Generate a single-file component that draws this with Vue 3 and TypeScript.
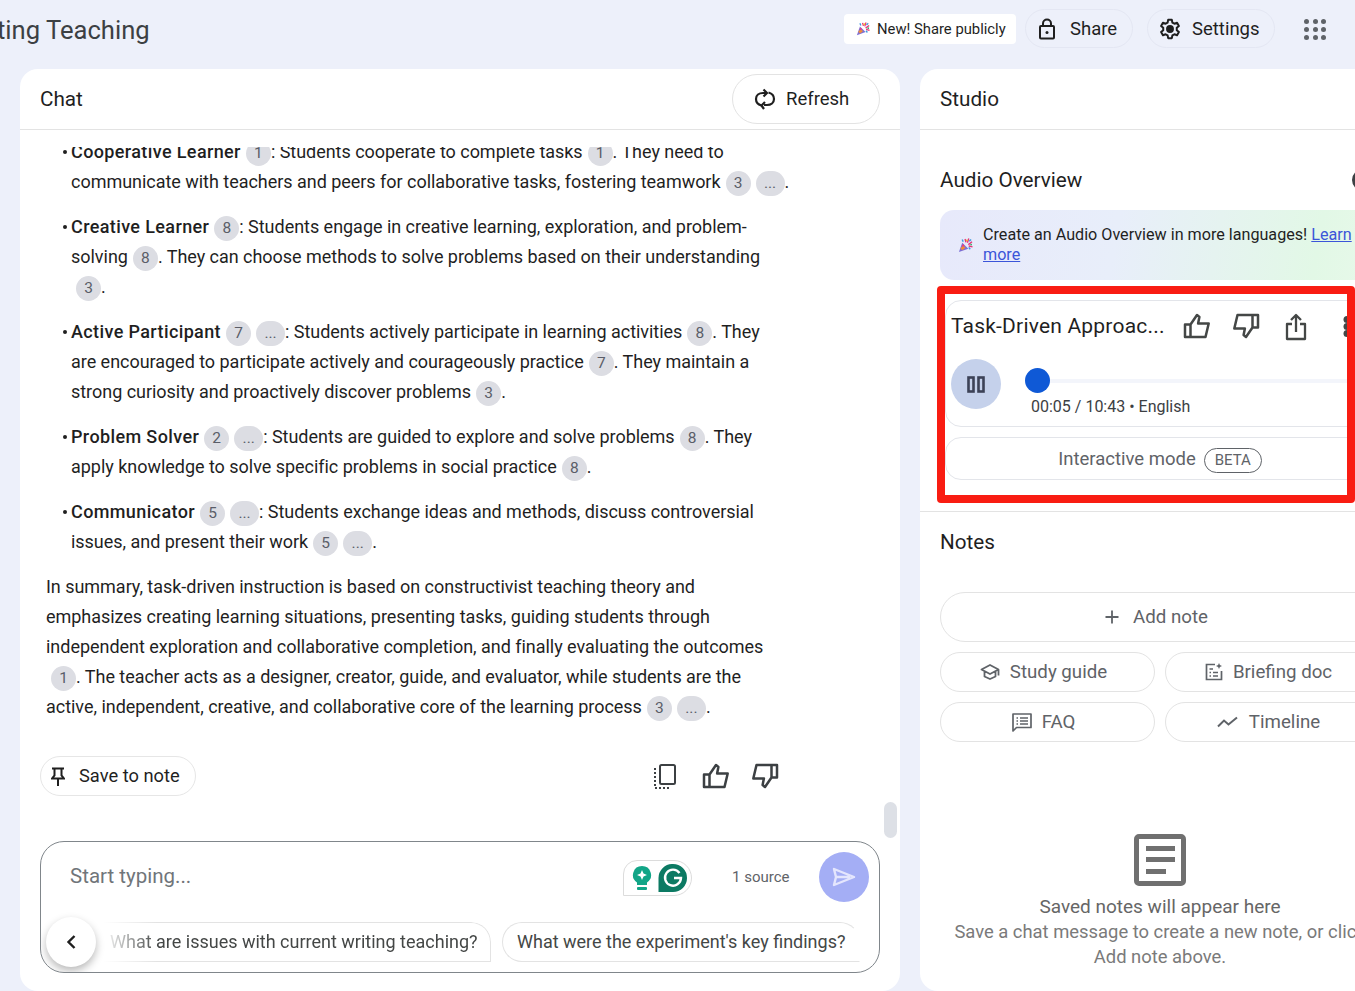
<script setup lang="ts">
type Seg = { t?: string; b?: string; c?: string; br?: boolean }

function parse(src: string): Seg[] {
  // {n} = citation chip, *x* = bold, | = line break
  const out: Seg[] = []
  const re = /\{([^}]+)\}|\*([^*]+)\*|(\|)|([^{*|]+)/g
  let m: RegExpExecArray | null
  while ((m = re.exec(src))) {
    if (m[1]) out.push({ c: m[1] })
    else if (m[2]) out.push({ b: m[2] })
    else if (m[3]) out.push({ br: true })
    else if (m[4]) out.push({ t: m[4] })
  }
  return out
}

const bullets = [
  '*Cooperative Learner*{1}: Students cooperate to complete tasks{1}. They need to|communicate with teachers and peers for collaborative tasks, fostering teamwork{3}{...}.',
  '*Creative Learner*{8}: Students engage in creative learning, exploration, and problem-|solving{8}. They can choose methods to solve problems based on their understanding|{3}.',
  '*Active Participant*{7}{...}: Students actively participate in learning activities{8}. They|are encouraged to participate actively and courageously practice{7}. They maintain a|strong curiosity and proactively discover problems{3}.',
  '*Problem Solver*{2}{...}: Students are guided to explore and solve problems{8}. They|apply knowledge to solve specific problems in social practice{8}.',
  '*Communicator*{5}{...}: Students exchange ideas and methods, discuss controversial|issues, and present their work{5}{...}.',
].map(parse)

const summary = parse(
  'In summary, task-driven instruction is based on constructivist teaching theory and|emphasizes creating learning situations, presenting tasks, guiding students through|independent exploration and collaborative completion, and finally evaluating the outcomes|{1}. The teacher acts as a designer, creator, guide, and evaluator, while students are the|active, independent, creative, and collaborative core of the learning process{3}{...}.',
)
</script>

<template>
  <div class="page">
    <svg class="defs" width="0" height="0" aria-hidden="true">
      <defs>
        <symbol id="thumb" viewBox="0 0 28 26">
          <path d="M2 11.500h5.500V24H2zM7.500 11.500 14 2l2.400 2-1.300 6.500h10.600L22.500 24h-15" fill="none" stroke="currentColor" stroke-width="2.500" stroke-linejoin="round" />
        </symbol>
        <symbol id="party" viewBox="0 0 16 16">
          <path d="M1 15 4.500 5 11 11.500z" fill="#7d6fd6" />
          <path d="M2.500 11 5.500 8l2.500 2.500-3.500 2.500z" fill="#ef8a3c" />
          <path d="M4 8 5.500 6.500 7 8 5 9.500z" fill="#e8417f" />
          <path d="M7.500 1l1 3.500M11.500.5 10 5M15 4l-4 3M15.500 9.500l-4-1" stroke="#e5377c" stroke-width="1.500" />
          <path d="M4.500 1.500l1 2.500M14 1.500l-2 2M13 12l-1.500-2" stroke="#3f9be0" stroke-width="1.500" />
          <circle cx="9.500" cy="2.500" r="1" fill="#f2bd1d" />
          <circle cx="14" cy="7" r="1" fill="#35b36b" />
        </symbol>
      </defs>
    </svg>

    <header class="topbar">
      <h1 class="title">Writing Teaching</h1>
      <div class="top-actions">
        <div class="new-chip">
          <svg class="party" width="14" height="14"><use href="#party" /></svg>
          <span>New! Share publicly</span>
        </div>
        <button class="top-btn share">
          <svg width="18" height="22" viewBox="0 0 18 22" fill="none" stroke="#1f1f1f" stroke-width="2">
            <rect x="2" y="8" width="14" height="12.500" rx="1" />
            <path d="M5 8V5.500a4 4 0 0 1 8 0V8" />
            <circle cx="9" cy="14.500" r="1.500" fill="#1f1f1f" stroke="none" />
          </svg>
          <span>Share</span>
        </button>
        <button class="top-btn settings">
          <svg width="22" height="22" viewBox="0 0 24 24" fill="none" stroke="#1f1f1f" stroke-width="2.200" stroke-linejoin="round">
            <path d="M10 2h4l.6 3 2.200 1.200 2.900-1 2 3.500-2.300 2v2.600l2.300 2-2 3.500-2.900-1L14.600 19 14 22h-4l-.6-3-2.200-1.200-2.900 1-2-3.500 2.300-2v-2.600l-2.300-2 2-3.500 2.900 1L9.400 5z" />
            <circle cx="12" cy="12" r="3.200" fill="#1f1f1f" />
          </svg>
          <span>Settings</span>
        </button>
        <div class="apps">
          <i v-for="n in 9" :key="n"></i>
        </div>
      </div>
    </header>

    <main class="columns">
      <section class="panel chat">
        <div class="panel-head">
          <h2>Chat</h2>
          <button class="refresh">
            <svg width="22" height="24" viewBox="0 0 22 24" fill="none" stroke="#1f1f1f" stroke-width="2.200">
              <path d="M7.500 18.500C4 17.500 2 15 2 12c0-3.500 3-6 7-6h3" />
              <path d="M14.500 5.500c3.500 1 5.500 3.500 5.500 6.500 0 3.500-3 6-7 6h-3" />
              <path d="M9.500 2.500 13 6l-3.500 3.500M11 15l-3.500 3.500L10 22" stroke-linejoin="round" />
            </svg>
            <span>Refresh</span>
          </button>
        </div>

        <div class="messages">
          <div class="thread">
            <ul class="list">
              <li v-for="(segs, i) in bullets" :key="i">
                <i class="dot"></i>
                <div>
                  <template v-for="(s, j) in segs" :key="j">
                    <br v-if="s.br" />
                    <b v-else-if="s.b">{{ s.b }}</b>
                    <span v-else-if="s.c" class="cite" :class="{ wide: s.c === '...' }">{{ s.c }}</span>
                    <template v-else>{{ s.t }}</template>
                  </template>
                </div>
              </li>
            </ul>
            <p class="summary">
              <template v-for="(s, j) in summary" :key="j">
                <br v-if="s.br" />
                <span v-else-if="s.c" class="cite" :class="{ wide: s.c === '...' }">{{ s.c }}</span>
                <template v-else>{{ s.t }}</template>
              </template>
            </p>
            <div class="msg-actions">
              <button class="save">
                <svg width="14" height="19" viewBox="0 0 14 19" fill="none" stroke="#1f1f1f" stroke-width="2">
                  <path d="M1 1.500h12M3.500 1.500v7L1 11.500h12l-2.500-3v-7M7 11.500V19" />
                </svg>
                <span>Save to note</span>
              </button>
              <div class="msg-icons">
                <svg class="copy" width="23" height="27" viewBox="0 0 23 27" fill="none" stroke="#3c4043" stroke-width="2">
                  <rect x="7" y="2" width="15" height="19" rx="1.500" />
                  <path d="M2 5v20h16" stroke-dasharray="2 2" />
                </svg>
                <svg class="thumb-up" width="28" height="26"><use href="#thumb" /></svg>
                <svg class="thumb-down" width="28" height="26"><use href="#thumb" /></svg>
              </div>
            </div>
          </div>
        </div>
        <i class="scroll-thumb"></i>

        <div class="composer">
          <div class="composer-top">
            <span class="placeholder">Start typing...</span>
            <div class="grammarly">
              <svg width="20" height="26" viewBox="0 0 20 26">
                <path d="M10 1a9 9 0 0 0-5 16.500V20h10v-2.500A9 9 0 0 0 10 1z" fill="#12a587" />
                <rect x="5" y="22" width="10" height="3" rx="1" fill="#12a587" />
                <path d="M10 5l1.500 3.500L15 10l-3.500 1.500L10 15l-1.500-3.500L5 10l3.500-1.500z" fill="#fff" />
              </svg>
              <svg width="30" height="28" viewBox="0 0 29 28">
                <path d="M14.500 0a14 14 0 0 1 0 28H0V14A14 14 0 0 1 14.500 0z" fill="#0c7a63" />
                <path d="M21 9a8 8 0 1 0 1.500 5h-7" fill="none" stroke="#fff" stroke-width="2.400" />
              </svg>
            </div>
            <span class="sources">1 source</span>
            <button class="send">
              <svg width="24" height="20" viewBox="0 0 24 20" fill="none" stroke="#e4e6fd" stroke-width="2.400" stroke-linejoin="round">
                <path d="M2 2 22 10 2 18l2-8zM4 10h14" />
              </svg>
            </button>
          </div>
          <div class="composer-bottom">
            <button class="back">
              <svg width="12" height="16" viewBox="0 0 12 16" fill="none" stroke="#1f1f1f" stroke-width="2.400">
                <path d="M9.500 2 3.500 8l6 6" />
              </svg>
            </button>
            <span class="suggest first">What are issues with current writing teaching?</span>
            <span class="suggest second">What were the experiment's key findings?</span>
          </div>
        </div>
      </section>

      <section class="panel studio">
        <div class="panel-head">
          <h2>Studio</h2>
        </div>
        <div class="audio-head">
          <h3>Audio Overview</h3>
          <i class="info"></i>
        </div>
        <div class="banner">
          <svg class="party" width="15" height="15"><use href="#party" /></svg>
          <p>Create an Audio Overview in more languages! <a>Learn<br />more</a></p>
        </div>

        <div class="highlight">
          <div class="player">
            <div class="player-top">
              <span class="track-title">Task-Driven Approac...</span>
              <svg class="p-up" width="28" height="26"><use href="#thumb" /></svg>
              <svg class="p-down" width="28" height="26"><use href="#thumb" /></svg>
              <svg class="p-share" width="22" height="29" viewBox="0 0 22 29" fill="none" stroke="#444746" stroke-width="2.300" stroke-linejoin="round">
                <path d="M7 12H2v15h18V12h-5M11 20V3M6 8l5-5 5 5" />
              </svg>
              <svg class="p-more" width="8" height="21" viewBox="0 0 8 21" fill="#444746">
                <circle cx="4" cy="3.500" r="3.500" /><circle cx="4" cy="10.500" r="3.500" /><circle cx="4" cy="17.500" r="3.500" />
              </svg>
            </div>
            <div class="player-main">
              <button class="pause">
                <svg width="18" height="17" viewBox="0 0 18 17" fill="none" stroke="#3c4257" stroke-width="2.600">
                  <rect x="1.500" y="1.500" width="5" height="14" />
                  <rect x="11.500" y="1.500" width="5" height="14" />
                </svg>
              </button>
              <div class="progress">
                <div class="slider"><i class="knob"></i><i class="rail"></i></div>
                <div class="time">00:05 / 10:43 • English</div>
              </div>
            </div>
          </div>
          <div class="interactive">
            <span>Interactive mode</span>
            <em>BETA</em>
          </div>
        </div>

        <div class="notes-head">
          <h3>Notes</h3>
        </div>
        <div class="note-actions">
          <button class="note-btn add">
            <svg width="16" height="16" viewBox="0 0 16 16" stroke="#5f6368" stroke-width="1.800"><path d="M8 1.500v13M1.500 8h13" /></svg>
            <span>Add note</span>
          </button>
          <button class="note-btn">
            <svg width="20" height="18" viewBox="0 0 20 18" fill="none" stroke="#5f6368" stroke-width="1.800" stroke-linejoin="round">
              <path d="M10 2 1.500 6.500 10 11l8.500-4.500zM4.500 8.500v5L10 16l5.500-2.500v-5M18.500 6.500v6" />
            </svg>
            <span>Study guide</span>
          </button>
          <button class="note-btn">
            <svg width="18" height="18" viewBox="0 0 18 18" fill="none" stroke="#5f6368" stroke-width="1.700">
              <path d="M10 1.500H1.500v15h15V8" />
              <path d="M4.500 6h3.500M4.500 9.500h1.500M8 9.500h5M4.500 13h1.500M8 13h5" />
              <path d="M14 0l.9 2.100L17 3l-2.100.9L14 6l-.9-2.100L11 3l2.100-.9z" fill="#5f6368" stroke="none" />
            </svg>
            <span>Briefing doc</span>
          </button>
          <button class="note-btn">
            <svg width="20" height="19" viewBox="0 0 20 19" fill="none" stroke="#5f6368" stroke-width="1.700" stroke-linejoin="round">
              <path d="M1 1h18v13.500H4.500L1 18zM4.500 5h1.500M8 5h8M4.500 8h1.500M8 8h8M4.500 11h1.500M8 11h8" />
            </svg>
            <span>FAQ</span>
          </button>
          <button class="note-btn">
            <svg width="22" height="12" viewBox="0 0 22 12" fill="none" stroke="#5f6368" stroke-width="2">
              <path d="M1 10.500 7 4.500l4.500 4L20 1.500" />
            </svg>
            <span>Timeline</span>
          </button>
        </div>

        <div class="empty">
          <svg width="52" height="52" viewBox="0 0 52 52">
            <rect x="2.500" y="2.500" width="47" height="47" rx="2.500" fill="none" stroke="#707070" stroke-width="5" />
            <path d="M12 12h29v5H12zM12 23h29v5H12zM12 35h20v5H12z" fill="#707070" />
          </svg>
          <strong>Saved notes will appear here</strong>
          <p>Save a chat message to create a new note, or click<br />Add note above.</p>
        </div>
      </section>
    </main>
  </div>
</template>

<style>
html, body { margin: 0; background: #edf0fa; overflow: hidden; }
</style>

<style scoped>
* { box-sizing: border-box; }
.page {
  width: 1355px;
  height: 991px;
  overflow: hidden;
  background: #edf0fa;
  color: #1f1f1f;
  font-family: Roboto, "Liberation Sans", sans-serif;
  position: relative;
}
.defs { display: block; height: 0; }
button { font: inherit; color: inherit; background: none; padding: 0; }
h1, h2, h3, p, ul { margin: 0; padding: 0; font-weight: 400; }
i { display: block; font-style: normal; }

.topbar { height: 69px; display: flex; align-items: flex-start; }
.title {
  font-size: 25.600px;
  line-height: 30px;
  margin: 15px 0 0 -40.400px;
  white-space: nowrap;
  color: #3c4043;
  width: 884.400px;
  flex: none;
}
.top-actions { display: flex; align-items: flex-start; flex: none; }
.new-chip {
  margin-top: 14px;
  height: 30px;
  width: 172px;
  background: #fff;
  border-radius: 4px;
  display: flex;
  align-items: center;
  padding-left: 12px;
  gap: 7px;
  font-size: 14.800px;
}
.party { flex: none; }
.top-btn {
  margin-top: 9px;
  height: 39px;
  border: 1px solid #e4e7f3;
  border-radius: 20px;
  display: flex;
  align-items: center;
  font-size: 18.500px;
}
.share { margin-left: 9px; width: 108px; padding-left: 12px; gap: 14px; }
.settings { margin-left: 14px; width: 128px; padding-left: 11px; gap: 11px; }
.apps {
  margin: 19px 0 0 29px;
  width: 22px;
  display: grid;
  grid-template-columns: repeat(3, 5px);
  gap: 3px 3.500px;
}
.apps i { width: 5px; height: 5px; border-radius: 50%; background: #5f6368; }

.columns { display: flex; gap: 20px; padding-left: 20px; width: 1420px; }
.panel {
  flex: none;
  height: 922px;
  background: #fff;
  border-radius: 18px;
  position: relative;
  display: flex;
  flex-direction: column;
}
.chat { width: 880px; }
.studio { width: 480px; }
.panel-head {
  flex: none;
  height: 61px;
  border-bottom: 1px solid #e3e3e3;
  padding: 0 20px;
  display: flex;
  align-items: center;
  justify-content: space-between;
}
.panel-head h2 { font-size: 20.700px; }
.refresh {
  width: 148px;
  height: 50px;
  border: 1px solid #e3e3e3;
  border-radius: 25px;
  display: flex;
  align-items: center;
  padding-left: 21px;
  gap: 10px;
  font-size: 18.500px;
}

.messages { flex: 1; min-height: 0; margin-top: 17px; overflow: hidden; }
.thread { margin-top: -10px; font-size: 18px; letter-spacing: -.03px; line-height: 30px; white-space: nowrap; color: #1f1f1f; }
.list { list-style: none; padding-left: 43px; }
.list li { display: flex; margin-bottom: 15px; }
.dot { flex: none; width: 4px; height: 4px; margin: 13px 4px 0 0; border-radius: 50%; background: #1f1f1f; }
.list b { font-weight: 500; letter-spacing: .38px; }
.summary { padding-left: 26px; }
.cite {
  display: inline-block;
  width: 25px;
  height: 25px;
  margin-left: 5px;
  border-radius: 13px;
  background: #dcdde3;
  color: #5a5d68;
  font-size: 15.500px;
  line-height: 25px;
  text-align: center;
  vertical-align: middle;
}
.cite.wide { width: 29px; }

.msg-actions { display: flex; align-items: center; height: 40px; margin: 34px 0 0 20px; }
.save {
  width: 156px;
  height: 40px;
  border: 1px solid #e6e6e6;
  border-radius: 20px;
  display: flex;
  align-items: center;
  padding-left: 10px;
  gap: 14px;
  font-size: 18.300px;
}
.msg-icons { display: flex; align-items: center; margin-left: 457px; color: #3c4043; }
.thumb-up { margin-left: 26px; }
.thumb-down { margin-left: 21px; transform: rotate(180deg); }

.scroll-thumb {
  position: absolute;
  left: 864px;
  top: 733px;
  width: 13px;
  height: 36px;
  border-radius: 7px;
  background: #dde0e6;
}

.composer {
  flex: none;
  margin: 45px 20px 18px;
  height: 132px;
  border: 1px solid #80868b;
  border-radius: 24px;
  overflow: hidden;
}
.composer-top { height: 50px; margin-top: 10px; display: flex; align-items: center; padding-left: 29px; }
.placeholder { font-size: 20.500px; color: #70757a; width: 553px; margin-top: -2px; }
.grammarly {
  width: 69px;
  height: 36px;
  margin-top: 2px;
  border: 1px solid #dcdcdc;
  border-radius: 14px 18px 18px 0;
  display: flex;
  align-items: center;
  padding-left: 8px;
  gap: 6px;
}
.sources { margin-left: 40px; width: 87px; font-size: 15px; color: #5f6368; }
.send {
  width: 50px;
  height: 50px;
  border: 0;
  border-radius: 50%;
  background: #a4aef5;
  display: flex;
  align-items: center;
  justify-content: center;
}
.composer-bottom { height: 50px; margin-top: 15px; padding-left: 5px; display: flex; align-items: center; position: relative; }
.back {
  flex: none;
  width: 50px;
  height: 50px;
  border: 0;
  border-radius: 50%;
  background: #fff;
  box-shadow: 0 4px 9px rgba(0, 0, 0, .28);
  display: flex;
  align-items: center;
  justify-content: center;
  position: relative;
  z-index: 1;
}
.suggest {
  flex: none;
  height: 40px;
  border: 1px solid #e3e3e3;
  border-radius: 20px;
  font-size: 18px;
  line-height: 38px;
  color: #444746;
  white-space: nowrap;
}
.first {
  width: 396px;
  margin-left: -1px;
  padding-left: 15px;
  border-left: 0;
  border-bottom-left-radius: 0;
  border-top-left-radius: 0;
  border-bottom-right-radius: 0;
  -webkit-mask-image: linear-gradient(90deg, transparent 8px, #000 62px);
  mask-image: linear-gradient(90deg, transparent 8px, #000 62px);
}
.second {
  width: 358px;
  margin-left: 11px;
  padding-left: 14px;
  border-right-color: transparent;
  border-bottom-right-radius: 0;
}

.audio-head { display: flex; height: 40px; margin-top: 30px; padding: 0 26px 0 20px; align-items: center; }
.audio-head h3, .notes-head h3 { font-size: 20.700px; }
.info {
  width: 22px;
  height: 22px;
  border: 3px solid #3c4043;
  border-radius: 50%;
  margin-left: auto;
}
.banner {
  flex: none;
  width: 440px;
  height: 70px;
  margin: 10px 0 0 20px;
  padding: 0 0 0 18px;
  border-radius: 14px;
  background: linear-gradient(100deg, #e7e9fb 0%, #e8eefa 40%, #e2f8e6 85%, #e8f9ea 100%);
  display: flex;
  align-items: center;
  gap: 10px;
}
.banner p { font-size: 16.150px; line-height: 20px; white-space: nowrap; }
.banner a { color: #3b55d9; text-decoration: underline; }

.highlight {
  flex: none;
  width: 418px;
  height: 217px;
  margin: 6px 0 0 17px;
  border: 8px solid #f91c12;
  border-radius: 4px;
  overflow: hidden;
  padding-top: 6px;
}
.player, .interactive {
  width: 430px;
  border: 1px solid #e3e5ea;
  border-radius: 16px 0 0 16px;
}
.player { height: 127px; padding-left: 5px; }
.player-top { display: flex; align-items: center; height: 50px; }
.track-title { font-size: 21px; letter-spacing: .2px; width: 213px; white-space: nowrap; }
.player-top svg { flex: none; color: #444746; }
.p-up { margin-left: 19px; }
.p-down { margin-left: 21px; transform: rotate(180deg); }
.p-share { margin-left: 25px; }
.p-more { margin-left: 36px; }
.player-main { display: flex; margin-top: 8px; }
.pause {
  flex: none;
  width: 50px;
  height: 50px;
  border: 0;
  border-radius: 50%;
  background: #c5d1eb;
  display: flex;
  align-items: center;
  justify-content: center;
}
.progress { margin-left: 24px; flex: 1; padding-top: 9px; }
.slider { display: flex; align-items: center; height: 25px; }
.knob { width: 25px; height: 25px; border-radius: 50%; background: #0f59d6; }
.rail { flex: 1; height: 4px; background: #f3f5fb; }
.time { margin: 3.500px 0 0 6px; font-size: 16px; line-height: 20px; color: #3c4043; }
.interactive {
  height: 43px;
  margin-top: 10px;
  display: flex;
  align-items: center;
  justify-content: center;
  gap: 8px;
  color: #5f6368;
  font-size: 18.500px;
}
.interactive em {
  font-style: normal;
  width: 58px;
  height: 25px;
  border: 1px solid #5f6368;
  border-radius: 13px;
  font-size: 15px;
  line-height: 23px;
  text-align: center;
  margin-top: 3px;
}

.notes-head {
  flex: none;
  margin-top: 8px;
  height: 51px;
  border-top: 1px solid #e3e3e3;
  padding: 10px 0 0 20px;
  display: flex;
  align-items: center;
}
.note-actions {
  width: 440px;
  margin: 30px 0 0 20px;
  display: grid;
  grid-template-columns: 215px 215px;
  gap: 10px;
}
.note-btn {
  height: 40px;
  border: 1px solid #e3e3e3;
  border-radius: 20px;
  display: flex;
  align-items: center;
  justify-content: center;
  gap: 10px;
  padding-right: 8px;
  color: #5f6368;
  font-size: 18.700px;
}
.note-btn.add { grid-column: 1 / 3; height: 50px; border-radius: 25px; gap: 13px; }

.empty {
  margin: 92px 0 0 20px;
  width: 440px;
  display: flex;
  flex-direction: column;
  align-items: center;
  text-align: center;
}
.empty strong { font-weight: 400; font-size: 19px; line-height: 25px; margin-top: 8px; color: #666; }
.empty p { font-size: 18.400px; line-height: 25px; color: #7a7a7a; white-space: nowrap; }
</style>
